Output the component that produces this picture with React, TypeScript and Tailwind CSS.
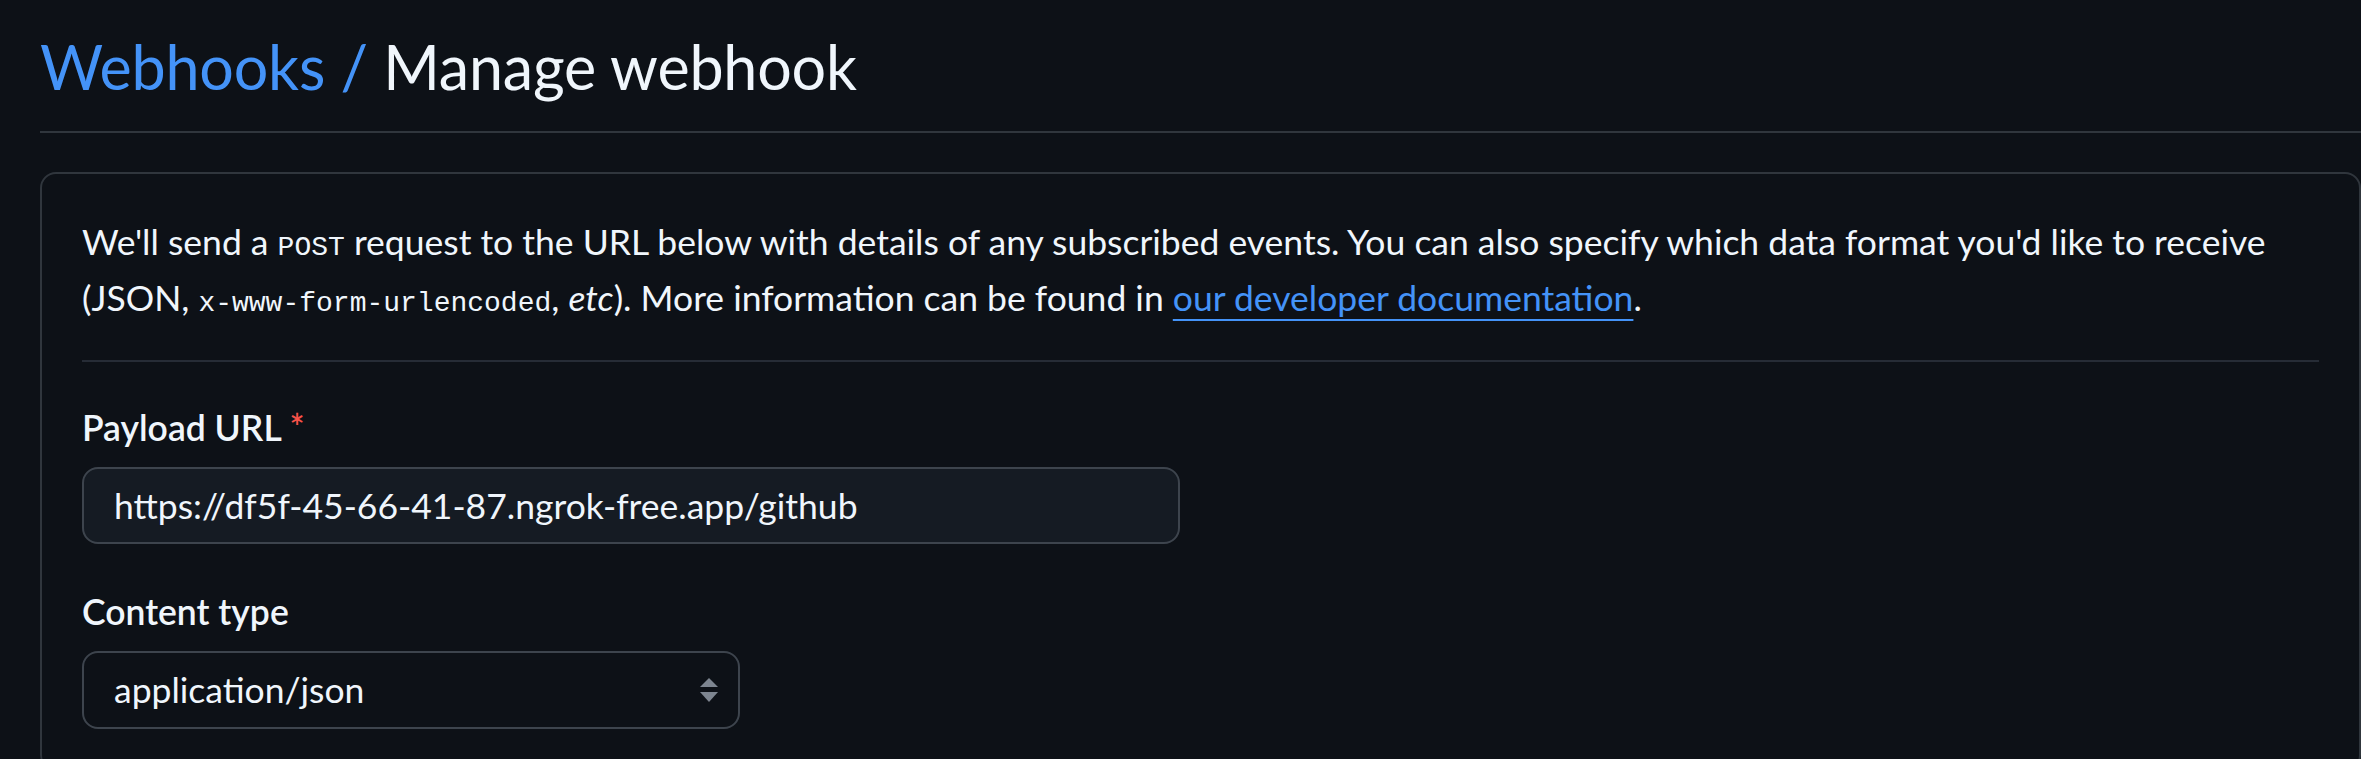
export default function App() {
  return (
    <div className="min-h-screen bg-[#0d1117] pl-[40px] pt-[27px] text-[#f0f6fc] font-['Segoe_UI','Lato',sans-serif]">
      <div className="border-b-2 border-[#30363d] pb-[24px]">
        <h2 className="text-[61px] leading-[80px] font-normal tracking-[-0.2px]">
          <a className="text-[#4493f8]">Webhooks /</a> Manage webhook
        </h2>
      </div>

      <div className="mt-[39px] border-2 border-[#30363d] rounded-[16px] px-[40px] pt-[40px] pb-[40px]">
        <div className="border-b-2 border-[#262c36] pb-[34px]">
          <p className="text-[35.5px] leading-[56px]">
            <span className="whitespace-nowrap">
              We'll send a <code className="font-['Liberation_Mono',monospace] text-[28px] leading-none">POST</code> request
              to the URL below with details of any subscribed events. You can also specify which data format you'd like to
              receive
            </span>
            <br />
            (JSON, <code className="font-['Liberation_Mono',monospace] text-[28px] leading-none">x-www-form-urlencoded</code>,{" "}
            <em>etc</em>). More information can be found in{" "}
            <a className="text-[#4493f8] underline decoration-2 underline-offset-[8px]">our developer documentation</a>.
          </p>
        </div>

        <div className="pt-[38px]">
          <label className="block text-[35.5px] leading-[56px] font-semibold">
            Payload URL <span className="text-[#f85149]">*</span>
          </label>
          <div className="mt-[11px] w-[1098px] h-[77px] rounded-[16px] border-2 border-[#3d444d] bg-[#151b23] px-[30px] flex items-center text-[35.5px]">
            https://df5f-45-66-41-87.ngrok-free.app/github
          </div>
        </div>

        <div className="pt-[40px]">
          <label className="block text-[35.5px] leading-[56px] font-semibold">Content type</label>
          <div className="mt-[11px] w-[658px] h-[78px] rounded-[16px] border-2 border-[#3d444d] bg-[#0d1117] pl-[30px] pr-[20px] flex items-center justify-between text-[35.5px]">
            <span>application/json</span>
            <svg width="18" height="25" viewBox="0 0 18 25" className="text-[#7d8590]" fill="currentColor">
              <path d="M9 0 L18 9 L0 9 Z" />
              <path d="M0 14 L18 14 L9 24 Z" />
            </svg>
          </div>
        </div>
      </div>
    </div>
  );
}
